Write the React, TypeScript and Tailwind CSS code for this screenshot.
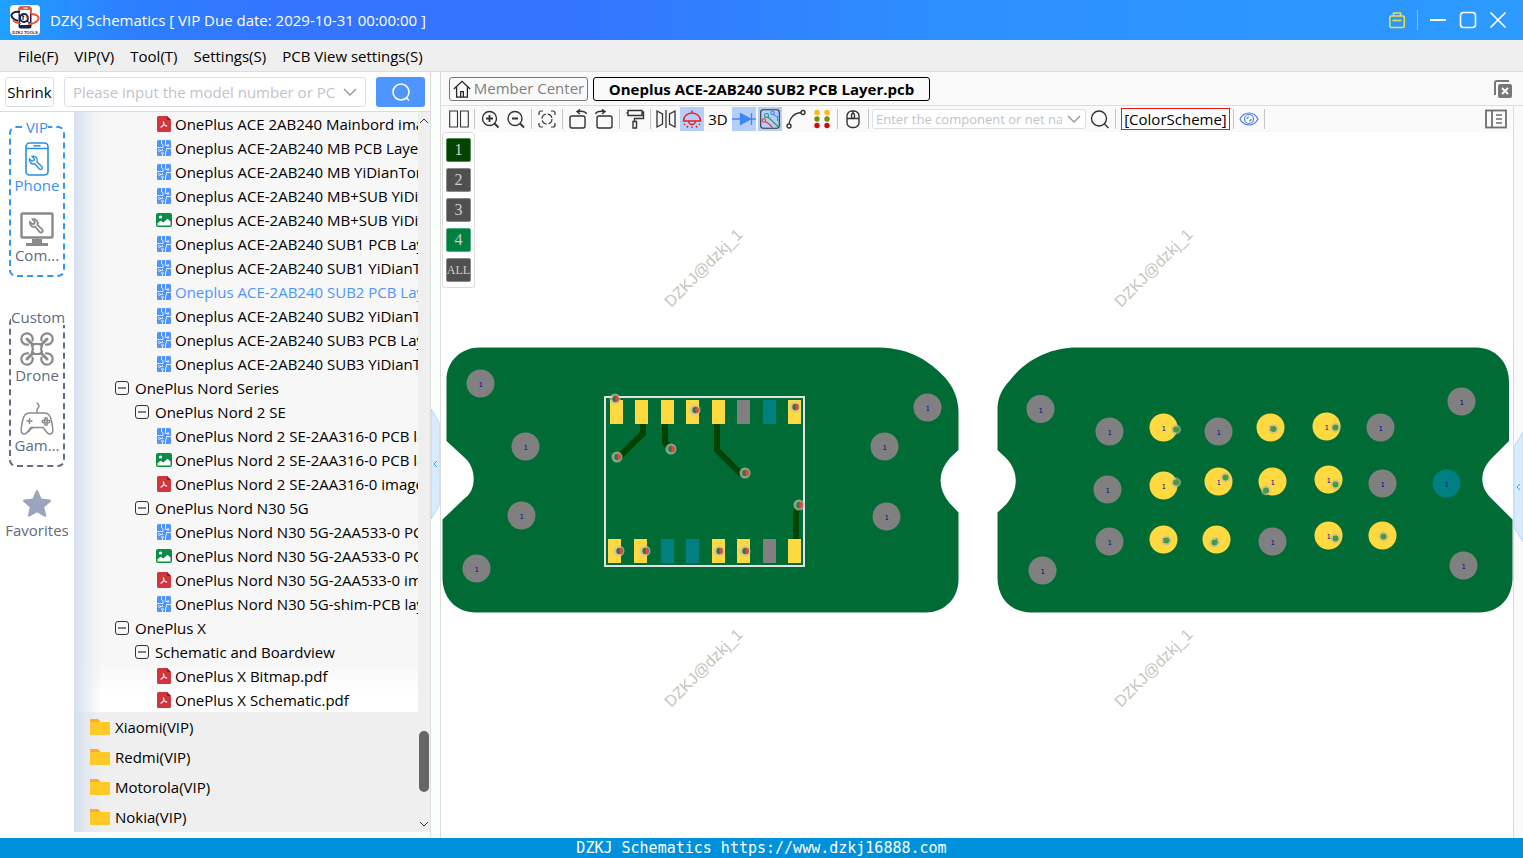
import type { ReactNode } from "react";

type FileKind = "pdf" | "pcb" | "img";
type TreeRow = { name: string; level?: 1 | 2; kind?: FileKind; selected?: boolean };

const tree: TreeRow[] = [
  { name: "OnePlus ACE 2AB240 Mainbord image.pdf", kind: "pdf" },
  { name: "Oneplus ACE-2AB240 MB PCB Layer.pcb", kind: "pcb" },
  { name: "Oneplus ACE-2AB240 MB YiDianTong.pcb", kind: "pcb" },
  { name: "Oneplus ACE-2AB240 MB+SUB YiDianTong.pcb", kind: "pcb" },
  { name: "Oneplus ACE-2AB240 MB+SUB YiDianTong.jpg", kind: "img" },
  { name: "Oneplus ACE-2AB240 SUB1 PCB Layer.pcb", kind: "pcb" },
  { name: "Oneplus ACE-2AB240 SUB1 YiDianTong.pcb", kind: "pcb" },
  { name: "Oneplus ACE-2AB240 SUB2 PCB Layer.pcb", kind: "pcb", selected: true },
  { name: "Oneplus ACE-2AB240 SUB2 YiDianTong.pcb", kind: "pcb" },
  { name: "Oneplus ACE-2AB240 SUB3 PCB Layer.pcb", kind: "pcb" },
  { name: "Oneplus ACE-2AB240 SUB3 YiDianTong.pcb", kind: "pcb" },
  { name: "OnePlus Nord Series", level: 1 },
  { name: "OnePlus Nord 2 SE", level: 2 },
  { name: "OnePlus Nord 2 SE-2AA316-0 PCB layer.pcb", kind: "pcb" },
  { name: "OnePlus Nord 2 SE-2AA316-0 PCB layer.jpg", kind: "img" },
  { name: "OnePlus Nord 2 SE-2AA316-0 image.pdf", kind: "pdf" },
  { name: "OnePlus Nord N30 5G", level: 2 },
  { name: "OnePlus Nord N30 5G-2AA533-0 PCB layer.pcb", kind: "pcb" },
  { name: "OnePlus Nord N30 5G-2AA533-0 PCB layer.jpg", kind: "img" },
  { name: "OnePlus Nord N30 5G-2AA533-0 image.pdf", kind: "pdf" },
  { name: "OnePlus Nord N30 5G-shim-PCB layer.pcb", kind: "pcb" },
  { name: "OnePlus X", level: 1 },
  { name: "Schematic and Boardview", level: 2 },
  { name: "OnePlus X Bitmap.pdf", kind: "pdf" },
  { name: "OnePlus X Schematic.pdf", kind: "pdf" },
];

const brands = ["Xiaomi(VIP)", "Redmi(VIP)", "Motorola(VIP)", "Nokia(VIP)"];
const menus = ["File(F)", "VIP(V)", "Tool(T)", "Settings(S)", "PCB View settings(S)"];

const layers = [
  { name: "1", cls: "bg-[#044400] border-[#4f8a4f] text-[16px]" },
  { name: "2", cls: "bg-[#505050] border-[#8a8a8a] text-[16px]" },
  { name: "3", cls: "bg-[#505050] border-[#8a8a8a] text-[16px]" },
  { name: "4", cls: "bg-[#008040] border-[#4fae7f] text-[16px]" },
  { name: "ALL", cls: "bg-[#505050] border-[#8a8a8a] text-[12px]" },
];

const GOLD = "#ffd940";
const GRAY = "#808080";
const TEAL = "#008080";

// [x, y, fill]
const pads: [number, number, string][] = [
  [480.5, 383.5, GRAY], [525.5, 446.5, GRAY], [521.5, 515.5, GRAY], [476.5, 568.5, GRAY],
  [927.5, 407.5, GRAY], [884.5, 446.5, GRAY], [886.5, 516.5, GRAY],
  [1040.5, 409, GRAY], [1461.5, 401.5, GRAY], [1042.5, 570.5, GRAY], [1463.5, 565.5, GRAY],
  [1109.5, 431.5, GRAY], [1163.5, 427.5, GOLD], [1218.5, 431.5, GRAY], [1270.5, 427.5, GOLD],
  [1326.5, 426.5, GOLD], [1380.5, 427.5, GRAY],
  [1107.5, 489.5, GRAY], [1163.5, 485.5, GOLD], [1218.5, 481.5, GOLD], [1272.5, 481.5, GOLD],
  [1328.5, 479.5, GOLD], [1382.5, 483.5, GRAY], [1446.5, 483.5, TEAL],
  [1109.5, 541.5, GRAY], [1163.5, 539.5, GOLD], [1216.5, 539.5, GOLD], [1272.5, 541.5, GRAY],
  [1328.5, 535.5, GOLD], [1382.5, 535.5, GOLD],
];

const pins: [number, number, string][] = [
  [610, 400, GOLD], [635, 400, GOLD], [661, 400, GOLD], [686, 400, GOLD],
  [712, 400, GOLD], [737, 400, GRAY], [763, 400, TEAL], [788, 400, GOLD],
  [608, 539, GOLD], [634, 539, GOLD], [661, 539, TEAL], [686, 539, TEAL],
  [712, 539, GOLD], [737, 539, GOLD], [763, 539, GRAY], [788, 539, GOLD],
];

const vias = [
  [615, 399], [695, 410], [795, 407], [617, 457], [671, 449], [745, 473],
  [799, 505], [619, 551], [645, 551], [719, 551], [745, 551],
];

const testVias = [
  [1176, 429.5], [1273.5, 429], [1335.5, 427.5], [1176, 482.5], [1225.5, 477.5], [1266, 490.5],
  [1335.5, 484.5], [1166.5, 540.5], [1214.5, 542.5], [1335.5, 538.5], [1383.5, 536.5],
];

const watermarks = [
  [671, 308], [1121, 308], [671, 708], [1121, 708],
];

function Svg({ size = 20, children }: { size?: number; children: ReactNode }) {
  return (
    <svg
      width={size}
      height={size}
      viewBox="0 0 20 20"
      fill="none"
      stroke="#333"
      strokeWidth="1.4"
      className="shrink-0"
      aria-hidden="true"
    >
      {children}
    </svg>
  );
}

function Logo() {
  return (
    <svg width="30" height="30" viewBox="0 0 30 30" fill="none" aria-hidden="true">
      <rect width="30" height="30" rx="4" fill="#fff" />
      <rect x="8.500" y="1.500" width="13" height="22" rx="2" fill="#16244d" />
      <path d="M8.500 9V3.500a2 2 0 0 1 2-2h9a2 2 0 0 1 2 2V9z" fill="#f0542c" />
      <rect x="10" y="5" width="10" height="15" fill="#fff" />
      <path d="M13.500 3.200h4" stroke="#fff" />
      <circle cx="14" cy="13" r="4" stroke="#16244d" strokeWidth="2" />
      <path d="M17 16l3 2M13 11v4M11 9l3 3" stroke="#16244d" strokeWidth="1.200" />
      <circle cx="17.500" cy="12" r="1.200" stroke="#f0542c" />
      <path d="M10 7C4 6 0 9 2 12c1 2 3 3 6 4" stroke="#16244d" strokeWidth="2" />
      <path d="M21 9c6 0 9 3 7 6s-6 4-10 4" stroke="#f0542c" strokeWidth="2" />
      <path d="M3 15c2 3 5 3.500 8 3.500" stroke="#f0542c" strokeWidth="1.500" />
      <text x="15" y="28.500" textAnchor="middle" fontSize="4" fontWeight="700" fill="#16244d" fontFamily="Liberation Sans, sans-serif">
        DZKJ TOOLS
      </text>
    </svg>
  );
}

function FileIcon({ kind }: { kind: FileKind }) {
  if (kind === "pdf") {
    return (
      <svg width="16" height="16" viewBox="0 0 16 16" fill="none" className="shrink-0" aria-hidden="true">
        <path d="M2.500 0H11l4 4v10.500A1.500 1.500 0 0 1 13.500 16h-11A1.500 1.500 0 0 1 1 14.500v-13A1.500 1.500 0 0 1 2.500 0z" fill="#d1353d" />
        <path d="M11 0l4 4h-3a1 1 0 0 1-1-1z" fill="#8e1a22" />
        <path d="M7.300 5.500c1.200.6.600 2.600-.3 4.100-.8 1.300-1.700 2-2.200 1.700-.6-.5 1.500-1.700 3.500-1.900 1.500-.2 2.900 0 2.800.6-.2.600-1.700 0-2.700-1.200C7.500 7.600 7 6.200 7.300 5.500z" stroke="#fff" strokeWidth=".9" />
      </svg>
    );
  }
  if (kind === "img") {
    return (
      <svg width="16" height="16" viewBox="0 0 16 16" fill="none" className="shrink-0" aria-hidden="true">
        <rect y="1" width="16" height="14" rx="2" fill="#0b8f47" />
        <circle cx="4.500" cy="5" r="1.600" fill="#fff" />
        <path d="M1.500 13.500v-2.300l3.200-2.400 2.600 1.800 4.200-3.800 3 2.800v3.900z" fill="#fff" />
      </svg>
    );
  }
  return (
    <svg width="16" height="16" viewBox="0 0 16 16" fill="none" className="shrink-0" aria-hidden="true">
      <rect x="1" width="14" height="16" rx="1.500" fill="#4f93fb" />
      <g stroke="#fff" strokeWidth=".8">
        <path d="M5.500 0v3.500l1.500 1v3H1M9.500 0v5.500h1.500M4.500 10.500h2V9M15 8.500h-4.500V11l-1 1v4M6.500 16v-1.500" />
        <circle cx="12" cy="5.500" r="1" />
        <circle cx="3.500" cy="10.500" r="1" />
        <circle cx="6.500" cy="13.300" r="1" />
      </g>
    </svg>
  );
}

function Minus() {
  return (
    <svg width="14" height="14" viewBox="0 0 14 14" fill="none" stroke="#333" className="shrink-0" aria-hidden="true">
      <rect x=".5" y=".5" width="13" height="13" rx="2.500" />
      <path d="M3 7h8" strokeWidth="1.200" />
    </svg>
  );
}

const wrench =
  "M5 8.500a4 4 0 0 0 5.200 4.700l4.600 5.300c1.700 1.500 4-.6 2.600-2.400l-5-4.800A4 4 0 0 0 7.600 5.800l2.200 2.400-.4 2-2 .4z";

function PhoneIcon() {
  return (
    <svg width="34" height="34" viewBox="0 0 34 34" fill="none" stroke="#2a8fdd" strokeWidth="1.600" aria-hidden="true">
      <rect x="6" y="1" width="22" height="32" rx="3.500" />
      <path d="M6 6.500h22M13.500 3.800h7" />
      <path d={wrench} transform="translate(4.500 8.500)" strokeWidth="1.400" />
    </svg>
  );
}

function ComputerIcon() {
  return (
    <svg width="34" height="34" viewBox="0 0 34 34" fill="none" stroke="#8a8a8a" aria-hidden="true">
      <rect x="1.500" y="1.500" width="31" height="24" rx="1" strokeWidth="2.400" />
      <path d={wrench} transform="translate(5 1.500)" strokeWidth="1.800" />
      <path d="M12 27h10v4H12z" fill="#8a8a8a" stroke="none" />
      <path d="M6 32.500h22" strokeWidth="3" />
    </svg>
  );
}

function DroneIcon() {
  return (
    <svg width="34" height="34" viewBox="0 0 34 34" fill="none" stroke="#8a8a8a" strokeWidth="2.200" strokeLinecap="round" aria-hidden="true">
      <path d="M14 12h6l2 2-1 3 1 3-2 2h-6l-2-2 1-3-1-3z" />
      <path d="M7 7l6 6M27 7l-6 6M7 27l6-6M27 27l-6-6" strokeWidth="3" />
      <path d="M12.500 8.500A5.700 5.700 0 1 0 8 12.600" />
      <path d="M21.500 8.500A5.700 5.700 0 1 1 26 12.600" />
      <path d="M12.500 25.500A5.700 5.700 0 1 1 8 21.400" />
      <path d="M21.500 25.500A5.700 5.700 0 1 0 26 21.400" />
    </svg>
  );
}

function GameIcon() {
  return (
    <svg width="34" height="34" viewBox="0 0 34 34" fill="none" stroke="#8a8a8a" strokeWidth="1.500" aria-hidden="true">
      <path d="M17 11V8c0-2 2-2 2-4s-2-1.500-2-3.500" />
      <path d="M9 11h16c3.500 0 5.500 3 6.500 8l1.300 8c.6 5-3.300 6.500-5.800 3.500L23 25.500H11L7 30.500C4.500 33.500.6 32 1.200 27l1.300-8C3.500 14 5.500 11 9 11z" />
      <path d="M9.500 16v6M6.500 19h6M8 30c2-1 2-3.500 5-4.500" />
      <circle cx="26" cy="17" r="1.300" />
      <circle cx="26" cy="22" r="1.300" />
      <circle cx="23.500" cy="19.500" r="1.300" />
      <circle cx="28.500" cy="19.500" r="1.300" />
    </svg>
  );
}

function StarIcon() {
  return (
    <svg width="34" height="34" viewBox="0 0 34 34" fill="#9aa5bd" stroke="#9aa5bd" strokeWidth="2.500" strokeLinejoin="round" aria-hidden="true">
      <path d="M17 4.500l3.700 8.300 9 .9-6.800 6 2 8.800L17 24l-7.900 4.500 2-8.800-6.800-6 9-.9z" />
    </svg>
  );
}

function NavItem({ icon, label, active }: { icon: ReactNode; label: string; active?: boolean }) {
  return (
    <button
      className={`flex w-full flex-col items-center whitespace-nowrap leading-[18px] ${active ? "text-[#3b8ff5]" : "text-[#626b80]"}`}
    >
      {icon}
      {label}
    </button>
  );
}

function Tool({ label, on, children }: { label: string; on?: boolean; children: ReactNode }) {
  return (
    <button
      aria-label={label}
      className={`flex h-[24px] w-[24px] shrink-0 items-center justify-center ${on ? "bg-[#b5cffb]" : ""}`}
    >
      {children}
    </button>
  );
}

function Sep() {
  return <span className="mx-px h-[20px] w-px shrink-0 bg-[#c4c4c4]" />;
}

function Chevron() {
  return (
    <svg width="14" height="14" viewBox="0 0 14 14" fill="none" stroke="#9a9a9a" strokeWidth="1.500" aria-hidden="true">
      <path d="M1 4l6 6 6-6" />
    </svg>
  );
}

function Toolbar() {
  return (
    <div className="flex h-[26px] shrink-0 items-center gap-[2px] bg-[#fafafa] px-[6px]">
      <Tool label="Split view">
        <Svg><path d="M.7 2h7.800v16H.7zM11.500 2h7.800v16h-7.800z" strokeWidth="1.100" /></Svg>
      </Tool>
      <Sep />
      <Tool label="Zoom in">
        <Svg><circle cx="9.500" cy="9.500" r="7" /><path d="M14.500 14.500l4 4M9.500 6v7M6 9.500h7" strokeWidth="1.800" /></Svg>
      </Tool>
      <Tool label="Zoom out">
        <Svg><circle cx="9" cy="9.500" r="7" /><path d="M14 14.500l4 4M6 9.500h6" strokeWidth="1.800" /></Svg>
      </Tool>
      <Sep />
      <Tool label="Fit">
        <Svg>
          <path d="M2 6V4a2 2 0 0 1 2-2h2M14 2h2a2 2 0 0 1 2 2v2M18 14v2a2 2 0 0 1-2 2h-2M6 18H4a2 2 0 0 1-2-2v-2" strokeWidth="1.200" />
          <circle cx="10" cy="10" r="5" strokeWidth="1.200" strokeDasharray="6 1.850" />
        </Svg>
      </Tool>
      <Sep />
      <Tool label="Rotate left">
        <Svg><rect x="2" y="7" width="15" height="12" rx="2" /><path d="M18.500 5c-1-2.500-5-3-9-2.500M12 .5L9 2.500 12 5" /></Svg>
      </Tool>
      <Tool label="Rotate right">
        <Svg><rect x="3" y="7" width="15" height="12" rx="2" /><path d="M1.500 5c1-2.500 5-3 9-2.500M8 .5l3 2L8 5" /></Svg>
      </Tool>
      <Sep />
      <Tool label="Paint">
        <Svg><path d="M3 1.500h14v5H3zM3 4H1.500M17 3h1.500v6.500H9.500V12M8 12.500h3.500V19H8z" /></Svg>
      </Tool>
      <Sep />
      <Tool label="Mirror">
        <Svg><path d="M1 2l5.500 3v10L1 18zM19 2l-5.500 3v10l5.500 3z" strokeWidth="1.300" /><path d="M10 1v18" strokeWidth="1.300" /></Svg>
      </Tool>
      <Tool label="Highlight" on>
        <Svg><g stroke="#f21b1b"><path d="M1.500 12a8.500 8 0 0 1 17 0zM10 4V1.500M6.500 12a3.500 3.500 0 0 0 7 0M3 15l-1 1M17 15l1 1M6 17l-1 1.500M14 17l1 1.500M10 17.500V19" /></g></Svg>
      </Tool>
      <Tool label="3D view"><span className="leading-5">3D</span></Tool>
      <Tool label="Diode" on>
        <svg width="24" height="20" viewBox="0 0 24 20" fill="#3d86fb" stroke="#3d86fb" strokeWidth="1.300" aria-hidden="true">
          <path d="M0 10h24M19.500 4v12" /><path d="M8.500 4.500v11l10-5.500z" />
        </svg>
      </Tool>
      <Tool label="Net" on>
        <Svg>
          <g strokeWidth="1.100">
            <rect x=".7" y=".7" width="18.600" height="18.600" rx="2.500" />
            <path d="M8 8l10.500 10" stroke="#22a34a" />
            <circle cx="6.500" cy="6.500" r="2" stroke="#22a34a" />
            <path d="M13.500 5.500l4 2.500V12" stroke="#3d86fb" /><circle cx="12.500" cy="4" r="1.700" stroke="#3d86fb" />
            <path d="M5.500 12.500l3 2 4 4" stroke="#f0323c" /><circle cx="4" cy="11.500" r="1.700" stroke="#f0323c" />
          </g>
        </Svg>
      </Tool>
      <Tool label="Measure">
        <Svg><circle cx="3" cy="17" r="2" /><circle cx="17" cy="3.500" r="2" /><path d="M3 15C3.500 9 8 4 15 3.500" /></Svg>
      </Tool>
      <Tool label="Colors">
        <Svg>
          <g stroke="none">
            <circle cx="5" cy="3.500" r="2.700" fill="#fdb813" /><circle cx="15" cy="3.500" r="2.700" fill="#fdb813" />
            <circle cx="5" cy="10" r="2.700" fill="#7b8a0a" /><circle cx="15" cy="10" r="2.700" fill="#7b8a0a" />
            <circle cx="5" cy="16.500" r="2.700" fill="#d20a0a" /><circle cx="15" cy="16.500" r="2.700" fill="#d20a0a" />
          </g>
        </Svg>
      </Tool>
      <Sep />
      <Tool label="Mouse">
        <Svg><rect x="4" y="2" width="12" height="16.500" rx="5" /><path d="M4 9.500h12M10 2v2" /><rect x="8.500" y="4.500" width="3" height="5" rx="1.500" /></Svg>
      </Tool>
      <Sep />
      <div className="relative w-[214px]">
        <input
          aria-label="Component or net name"
          placeholder="Enter the component or net name"
          className="block h-[20px] w-full rounded-[3px] border border-[#dcdfe6] bg-white pl-[3px] pr-[23px] text-[13px] outline-none placeholder:text-[#bfc3cb]"
        />
        <span className="absolute right-[5px] top-[3px]"><Chevron /></span>
      </div>
      <Tool label="Search">
        <Svg><circle cx="9" cy="9.500" r="7.500" /><path d="M14.500 15l4 4" /></Svg>
      </Tool>
      <Sep />
      <button className="ml-[2px] h-[22px] w-[109px] shrink-0 whitespace-nowrap border border-[#f01414] bg-white leading-5">
        [ColorScheme]
      </button>
      <Sep />
      <Tool label="Show">
        <Svg><g stroke="#4a7fe0" strokeWidth="1.200"><path d="M1 10c4-8 14-8 18 0-4 8-14 8-18 0z" /><circle cx="10" cy="10" r="4.500" /><path d="M8 10a2 2 0 0 1 2-2M12 10a2 2 0 0 1-2 2" /></g></Svg>
      </Tool>
      <Sep />
      <button aria-label="Side list" className="ml-auto">
        <svg width="22" height="20" viewBox="0 0 22 20" fill="none" stroke="#6e6e6e" strokeWidth="1.800" aria-hidden="true">
          <rect x="1" y="1.500" width="20" height="17" /><path d="M7 1.500v17" /><path d="M11 6h6M11 10h6M11 14h6" strokeWidth="1.400" />
        </svg>
      </button>
    </div>
  );
}

function Board() {
  return (
    <svg viewBox="441 132 1072 706" className="h-full w-full" aria-label="PCB layer view">
      <g fill="#006b35">
        <path d="M480 347.500H878C912 348 930 362 945.500 378C953 387 958 397 958.500 411V450L950 458C937.500 472 937.500 489 950 503.500L958.500 512.500V579C958.500 599 944 612.500 926 612.500H476C456 612.500 442.500 598 442.500 578V519.500L465 498C476.500 490 476.500 469 465.500 458.500L446.500 441V380C446.500 361 461 347.500 480 347.500Z" />
        <path d="M1077 347.500H1476C1495 347.500 1509 362 1509 381V441L1491.500 458.500C1479.500 471 1479.500 486 1490 497L1512.500 519.500V578C1512.500 598 1499 612.500 1479.500 612.500H1031C1011 612.500 997.500 598 997.500 578V512.500L1005.500 505C1019 490 1019 472 1006.500 458.500L997.500 450V408C998 397 1002 389 1009 381.500C1025 360 1050 347.500 1077 347.500Z" />
      </g>
      <g fill="none" stroke="#044400" strokeWidth="6">
        <path d="M643 422v11.500l-24 23.500M665 422v20.500l6 6.500M717 422v28l23 23h5M796 541v-28l3-7" />
      </g>
      <rect x="605" y="397" width="199" height="169" fill="none" stroke="#e2e2e2" strokeWidth="2" />
      {pins.map(([x, y, fill]) => (
        <rect key={`${x}-${y}`} x={x} y={y} width="13" height="24" fill={fill} />
      ))}
      {pads.map(([x, y, fill]) => (
        <g key={`${x}-${y}`}>
          <circle cx={x} cy={y} r="14" fill={fill} />
          <text x={x} y={y + 3.5} textAnchor="middle" fontSize="7" fill="#0000a0" fontFamily="DejaVu Sans Mono, monospace">
            1
          </text>
        </g>
      ))}
      {vias.map(([x, y]) => (
        <g key={`${x}-${y}`}>
          <circle cx={x} cy={y} r="5.500" fill="#c0c0c0" fillOpacity=".7" />
          <circle cx={x + 0.5} cy={y} r="3.200" fill="#42702f" />
          <path d={`M${x + 0.5} ${y - 3.2}a3.200 3.200 0 0 1 0 6.400z`} fill="#ee4433" />
        </g>
      ))}
      {testVias.map(([x, y]) => (
        <g key={`${x}-${y}`}>
          <circle cx={x} cy={y} r="5" fill="#b8b8b8" fillOpacity=".6" />
          <circle cx={x} cy={y} r="3" fill="#4a9a3c" />
        </g>
      ))}
      {watermarks.map(([x, y]) => (
        <text
          key={`${x}-${y}`}
          transform={`translate(${x} ${y}) rotate(-45)`}
          fontSize="16"
          fill="#c6c6ba"
          fontFamily="Liberation Sans, sans-serif"
        >
          DZKJ@dzkj_1
        </text>
      ))}
    </svg>
  );
}

function Handle({ label }: { label: string }) {
  return (
    <button aria-label={label} className="block">
      <svg width="9" height="112" viewBox="0 0 9 112" fill="none" aria-hidden="true">
        {label === "Hide panel" ? (
          <path d="M0 1l9 15v80l-9 15z" fill="#d9ecff" stroke="#b3d8ff" />
        ) : (
          <path d="M9 1L0 16v80l9 15z" fill="#d9ecff" stroke="#b3d8ff" />
        )}
        <path d="M6 53l-3 3 3 3" stroke="#3f9cf5" />
      </svg>
    </button>
  );
}

export default function App() {
  return (
    <div className="flex h-screen flex-col overflow-hidden bg-white font-['Open_Sans','Noto_Sans',sans-serif] text-[15px] text-black">
      <header className="flex h-[40px] shrink-0 items-center bg-[linear-gradient(90deg,#20a0ff_0%,#2c80ff_8%,#3375ff_18%,#3375ff_38%,#2d8fff_62%,#2c9bff_100%)] pl-[10px] pr-[15px] text-white">
        <Logo />
        <h1 className="ml-[10px]">DZKJ Schematics [ VIP Due date: 2029-10-31 00:00:00 ]</h1>
        <div className="ml-auto flex items-center gap-[10px]">
          <button aria-label="Toolbox">
            <Svg><g stroke="#f0e04a" strokeWidth="1.500"><rect x="2.800" y="6" width="14.500" height="11.500" rx="1.500" /><path d="M6.500 6V3h7v3M5.500 10.500h9" /></g></Svg>
          </button>
          <span className="h-[20px] w-px bg-white/40" />
          <button aria-label="Minimize"><Svg><path d="M2 10h16" stroke="#fff" strokeWidth="2" /></Svg></button>
          <button aria-label="Maximize"><Svg><rect x="2.500" y="2.500" width="15" height="15" rx="3" stroke="#fff" strokeWidth="1.600" /></Svg></button>
          <button aria-label="Close"><Svg><path d="M2.500 2.500l15 15M17.500 2.500l-15 15" stroke="#fff" strokeWidth="1.600" /></Svg></button>
        </div>
      </header>

      <nav className="flex h-[32px] shrink-0 items-center gap-[16px] border-b border-[#dcdcdc] bg-[#efefef] pl-[18px] pt-[2px]">
        {menus.map((m) => (
          <button key={m}>{m}</button>
        ))}
      </nav>

      <div className="flex min-h-0 flex-1">
        <aside className="flex w-[431px] shrink-0 flex-col border-r border-[#dcdcdc]">
          <div className="flex h-[40px] shrink-0 items-center border-b border-[#dcdcdc] px-[5px] pt-px">
            <button className="h-[30px] w-[49px] shrink-0 rounded-[3px] border border-[#dcdfe6] bg-white">Shrink</button>
            <div className="relative ml-[10px] flex-1">
              <input
                aria-label="Model number or PCB"
                placeholder="Please input the model number or PCB number"
                className="block h-[30px] w-full rounded-[3px] border border-[#dcdfe6] pl-[8px] pr-[30px] outline-none placeholder:text-[#bfc3cb]"
              />
              <span className="absolute right-[9px] top-[8px]"><Chevron /></span>
            </div>
            <button aria-label="Search models" className="ml-[10px] flex h-[30px] w-[49px] items-center justify-center rounded-[3px] bg-[#4f95ff]">
              <Svg><g stroke="#fff" strokeWidth="1.600"><circle cx="10" cy="10" r="8" /><path d="M15 15.500l3 3" /></g></Svg>
            </button>
          </div>

          <div className="flex min-h-0 flex-1 pb-[6px]">
            <div className="w-[74px] shrink-0 pt-[7px]">
              <fieldset className="mx-auto w-[56px] min-w-0 rounded-[7px] border-2 border-dashed border-[#2f97f5] pb-[11px]">
                <legend className="mx-auto leading-4 text-[#3b8ff5]">VIP</legend>
                <div className="flex flex-col gap-[18px] pt-[7px]">
                  <NavItem icon={<PhoneIcon />} label="Phone" active />
                  <NavItem icon={<ComputerIcon />} label="Com..." />
                </div>
              </fieldset>
              <fieldset className="mx-auto mt-[32px] w-[56px] min-w-0 rounded-[7px] border-2 border-dashed border-[#626b80] pb-[11px]">
                <legend className="mx-auto leading-4 text-[#626b80]">Custom</legend>
                <div className="flex flex-col gap-[18px] pt-[7px]">
                  <NavItem icon={<DroneIcon />} label="Drone" />
                  <NavItem icon={<GameIcon />} label="Gam..." />
                </div>
              </fieldset>
              <div className="mt-[20px]">
                <NavItem icon={<StarIcon />} label="Favorites" />
              </div>
            </div>

            <div className="min-w-0 flex-1 bg-[#efefef]">
              <div className="bg-[linear-gradient(180deg,#f7f7f7_0%,#f7f7f7_92%,#ffffff_97%)]">
                <ul className="bg-[linear-gradient(90deg,#d3deef_0px,#e6ebf4_10px,#f3f5f800_28px)]">
                  {tree.map((row, i) => (
                    <li key={i}>
                      {row.kind ? (
                        <button
                          className={`flex h-[24px] w-full items-center gap-[3px] overflow-hidden whitespace-nowrap pl-[82px] ${row.selected ? "text-[#4f95ff]" : ""}`}
                        >
                          <FileIcon kind={row.kind} />
                          {row.name}
                        </button>
                      ) : (
                        <button
                          className={`flex h-[24px] w-full items-center gap-[6px] whitespace-nowrap ${row.level === 1 ? "pl-[41px]" : "pl-[61px]"}`}
                        >
                          <Minus />
                          {row.name}
                        </button>
                      )}
                    </li>
                  ))}
                </ul>
              </div>
              <ul className="bg-[linear-gradient(90deg,#d3deef_0px,#e2e7f0_10px,#efefef00_28px)]">
                {brands.map((b) => (
                  <li key={b}>
                    <button className="flex h-[30px] w-full items-center gap-[5px] pl-[16px]">
                      <svg width="20" height="18" viewBox="0 0 20 18" aria-hidden="true">
                        <path d="M0 1h8l2 2v4H0z" fill="#ffa92e" />
                        <path d="M0 4h20v12.500a.5.500 0 0 1-.5.500H.5a.5.500 0 0 1-.5-.5z" fill="#ffc928" />
                      </svg>
                      {b}
                    </button>
                  </li>
                ))}
              </ul>
            </div>

            <div className="flex w-[12px] shrink-0 flex-col items-center justify-between bg-[#efefef] pb-[3px] pt-[4px]">
              <svg width="10" height="10" viewBox="0 0 10 10" fill="none" stroke="#333" aria-hidden="true">
                <path d="M1 7l4-4 4 4" />
              </svg>
              <div className="flex flex-1 flex-col justify-end pb-[27px]">
                <div className="h-[61px] w-[10px] rounded-full bg-[#666]" />
              </div>
              <svg width="10" height="10" viewBox="0 0 10 10" fill="none" stroke="#333" aria-hidden="true">
                <path d="M1 3l4 4 4-4" />
              </svg>
            </div>
          </div>
        </aside>

        <div className="flex w-[9px] shrink-0 items-center bg-[#fbfffb] pt-[18px]">
          <Handle label="Hide panel" />
        </div>

        <main className="flex min-w-0 flex-1 flex-col border-l border-[#dcdcdc]">
          <div className="flex h-[34px] shrink-0 items-center gap-[5px] border-b border-[#dcdcdc] bg-[#fafafa] pl-[8px] pr-[11px]">
            <button className="flex h-[24px] w-[139px] items-center justify-center gap-[3px] whitespace-nowrap rounded-[3px] border border-[#777] text-[#808080]">
              <Svg size={18}><path d="M1 10l9-8.500 9 8.500M4 8v11h12V8M8.500 19v-6h3v6" stroke="#222" /></Svg>
              Member Center
            </button>
            <button className="h-[24px] w-[337px] whitespace-nowrap rounded-[3px] border border-black font-bold leading-5">
              Oneplus ACE-2AB240 SUB2 PCB Layer.pcb
            </button>
            <button aria-label="Close all" className="ml-auto">
              <svg width="18" height="18" viewBox="0 0 18 18" fill="none" aria-hidden="true">
                <path d="M1 15V3a2 2 0 0 1 2-2h12" stroke="#777" strokeWidth="2" />
                <rect x="4" y="4" width="14" height="14" rx="2" fill="#777" />
                <path d="M8 8l6 6M14 8l-6 6" stroke="#fff" strokeWidth="1.800" />
              </svg>
            </button>
          </div>

          <div className="flex min-h-0 flex-1">
            <div className="flex min-w-0 flex-1 flex-col">
              <Toolbar />
              <div className="relative min-h-0 flex-1">
                <Board />
                <div className="absolute left-px top-0 flex flex-col gap-[6px] rounded-[3px] border border-[#dcdcdc] bg-white px-[3px] py-[5px]">
                  {layers.map((l) => (
                    <button
                      key={l.name}
                      className={`flex h-[24px] w-[25px] items-center justify-center rounded-[2px] border font-['Liberation_Serif',serif] leading-none text-[#cfcfcf] ${l.cls}`}
                    >
                      {l.name}
                    </button>
                  ))}
                </div>
              </div>
            </div>
            <div className="flex w-[10px] shrink-0 items-center border-l border-[#dcdcdc] bg-[#fafafa] pt-[30px]">
              <Handle label="Show panel" />
            </div>
          </div>
        </main>
      </div>

      <footer className="h-[20px] shrink-0 bg-[#0091dc] text-center font-['DejaVu_Sans_Mono',monospace] text-[15px] leading-5 text-white">
        DZKJ Schematics https://www.dzkj16888.com
      </footer>
    </div>
  );
}
